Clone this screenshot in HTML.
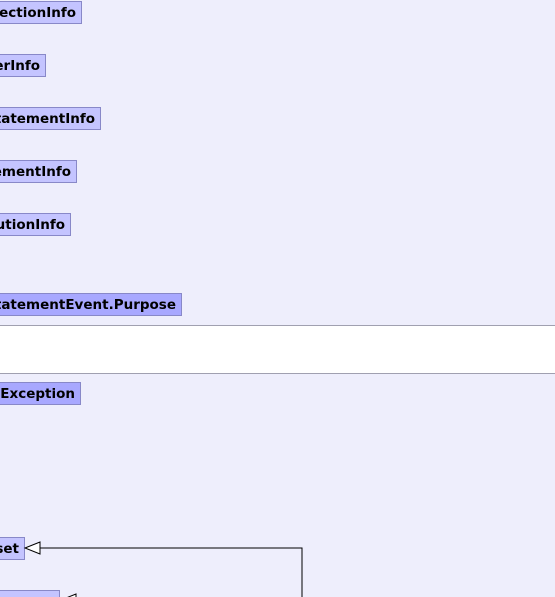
<!DOCTYPE html><html style="width:555px;height:597px;overflow:hidden"><head><style>
body{margin:0;width:555px;height:597px;overflow:hidden;background:#eeeefc;position:relative;font-family:"DejaVu Sans","Liberation Sans",sans-serif;font-weight:bold;font-size:13.5px}
.b{position:absolute;left:-40px;height:23px;border:1px solid #8888c8;background:#c4c4ff;box-sizing:border-box;text-align:right;padding-right:5px;line-height:23px;color:#000;white-space:nowrap;overflow:hidden}
.d{background:#a8a8ff}
</style></head><body>
<div class="b" style="top:1px;width:122px">nnectionInfo</div>
<div class="b" style="top:54px;width:86px">erInfo</div>
<div class="b" style="top:107px;width:141px">StatementInfo</div>
<div class="b" style="top:160px;width:117px">tementInfo</div>
<div class="b" style="top:213px;width:111px">cutionInfo</div>
<div class="b d" style="top:293px;width:222px">StatementEvent.Purpose</div>
<div style="position:absolute;left:0;top:325px;width:555px;height:49px;background:#fff;border-top:1px solid #a0a0b0;border-bottom:1px solid #a0a0b0;box-sizing:border-box"></div>
<div class="b d" style="top:382px;width:121px">nException</div>
<div class="b" style="top:537px;width:65px">set</div>
<div class="b" style="top:590px;width:100px;height:7px;border-bottom:none"></div>
<svg style="position:absolute;left:0;top:0" width="555" height="597">
<polyline points="40,548 302,548 302,597" fill="none" stroke="#000" stroke-width="1"/>
<polygon points="25,548 40,542 40,554" fill="#fff" stroke="#000"/>
<polygon points="61,600 76,594 76,606" fill="#fff" stroke="#000"/>
</svg>
</body></html>
